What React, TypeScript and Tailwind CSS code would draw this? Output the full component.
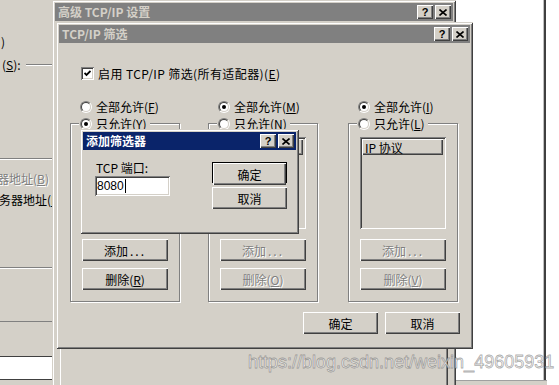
import React from "react";

// Win2k style 3D edges
const frame =
  "shadow-[inset_1px_1px_0_#d4d0c8,inset_-1px_-1px_0_#404040,inset_2px_2px_0_#ffffff,inset_-2px_-2px_0_#808080]";
const raised =
  "shadow-[inset_1px_1px_0_#ffffff,inset_-1px_-1px_0_#404040,inset_-2px_-2px_0_#808080]";
const sunken =
  "shadow-[inset_1px_1px_0_#808080,inset_-1px_-1px_0_#ffffff,inset_2px_2px_0_#404040,inset_-2px_-2px_0_#d4d0c8]";
const disabledText = "text-[#808080] [text-shadow:1px_1px_0_#ffffff]";

const TitleBtn = ({ children }: { children: React.ReactNode }) => (
  <span
    className={`flex items-center justify-center w-[16px] h-[14px] bg-[#d4d0c8] text-black ${raised}`}
  >
    {children}
  </span>
);

const CloseGlyph = () => (
  <svg width="8" height="7" viewBox="0 0 8 7">
    <path d="M0.5 0.5L7.5 6.5M7.5 0.5L0.5 6.5" stroke="#000" strokeWidth="1.6" />
  </svg>
);

const TitleBar = ({ title, active }: { title: string; active?: boolean }) => (
  <div
    className={`mx-[3px] mt-[3px] h-[18px] flex items-center justify-between pl-[3px] pr-[2px] ${
      active ? "bg-[#0a246a] text-white" : "bg-[#808080] text-[#d4d0c8]"
    }`}
  >
    <span className="font-bold leading-none whitespace-nowrap">{title}</span>
    <div className="flex gap-[2px]">
      <TitleBtn>
        <span className="font-['Liberation_Sans',sans-serif] font-bold text-[11px] leading-none">
          ?
        </span>
      </TitleBtn>
      <TitleBtn>
        <CloseGlyph />
      </TitleBtn>
    </div>
  </div>
);

const Radio = ({ checked }: { checked?: boolean }) => (
  <span className="inline-block w-[12px] h-[12px] shrink-0 rounded-full border border-t-[#808080] border-l-[#808080] border-b-white border-r-white">
    <span className="flex items-center justify-center w-full h-full rounded-full bg-white border border-t-[#404040] border-l-[#404040] border-b-[#d4d0c8] border-r-[#d4d0c8]">
      {checked && <span className="w-[4px] h-[4px] rounded-full bg-black" />}
    </span>
  </span>
);

const Checkbox = () => (
  <span className="flex items-center justify-center w-[13px] h-[13px] shrink-0 bg-white shadow-[inset_1px_1px_0_#808080,inset_-1px_-1px_0_#ffffff,inset_2px_2px_0_#404040,inset_-2px_-2px_0_#d4d0c8]">
    <svg width="7" height="7" viewBox="0 0 7 7">
      <path d="M0.5 3L2.5 5L6.5 1" stroke="#000" strokeWidth="1.8" fill="none" />
    </svg>
  </span>
);

const Btn = ({
  children,
  disabled,
  className = "",
}: {
  children: React.ReactNode;
  disabled?: boolean;
  className?: string;
}) => (
  <div
    className={`h-[22px] flex items-center justify-center bg-[#d4d0c8] whitespace-nowrap ${raised} ${
      disabled ? disabledText : ""
    } ${className}`}
  >
    {children}
  </div>
);

const Dots = () => <span className="tracking-[2px] ml-[2px]">...</span>;

interface ColumnProps {
  className: string;
  allLabel: React.ReactNode;
  onlyLabel: React.ReactNode;
  allowAll: boolean;
  header: string;
  delKey: string;
}

const FilterColumn = ({ className, allLabel, onlyLabel, allowAll, header, delKey }: ColumnProps) => (
  <div className={`w-[110px] shrink-0 ${className}`}>
    <div className="flex items-center gap-[4px] pl-[10px] h-[17px] whitespace-nowrap">
      <Radio checked={allowAll} />
      <span>{allLabel}</span>
    </div>
    <fieldset className="border border-[#808080] shadow-[inset_1px_1px_0_#ffffff,1px_1px_0_#ffffff] pl-[8px] pr-[11px] pt-[5px] pb-[11px]">
      <legend className="px-[1px] bg-[#d4d0c8]">
        <div className="flex items-center gap-[4px] h-[17px] pr-[2px] whitespace-nowrap">
          <Radio checked={!allowAll} />
          <span>{onlyLabel}</span>
        </div>
      </legend>
      <div className="ml-[3px]">
        <div className={`h-[92px] p-[2px] ${allowAll ? "bg-[#d4d0c8]" : "bg-white"} ${sunken}`}>
          <div
            className={`h-[16px] mr-[1px] flex items-center pl-[3px] bg-[#d4d0c8] whitespace-nowrap ${raised}`}
          >
            {header}
          </div>
        </div>
        <Btn className="mt-[10px]" disabled={allowAll}>
          添加
          <Dots />
        </Btn>
        <Btn className="mt-[7px]" disabled={allowAll}>
          删除(<u>{delKey}</u>)
        </Btn>
      </div>
    </fieldset>
  </div>
);

export default function App() {
  return (
    <div className="relative w-[559px] h-[385px] overflow-hidden bg-white text-[12px] leading-[17px] text-black font-['Noto_Sans_CJK_SC',sans-serif]">
      {/* white window edge on the right */}
      <div className="absolute left-[543px] top-0 w-[3px] h-[381px] border-l border-l-[#c0c0c0] bg-[#404040]" />
      <div className="absolute left-[452px] top-[380px] w-[95px] h-[5px] bg-[#d4d0c8] border-t border-t-[#a0a0a0]" />

      {/* window behind, on the left */}
      <div className="absolute left-0 top-0 w-[52px] h-[385px] bg-[#d4d0c8] overflow-hidden whitespace-nowrap">
        <div className="pt-[33px] h-[51px] pl-[1px]">)</div>
        <div className="mt-[5px] h-[17px] flex items-center pl-[2px]">
          <span>
            (<u>S</u>):
          </span>
          <div className="ml-[5px] flex-1 h-[2px] border-t border-t-[#808080] border-b border-b-white" />
        </div>
        <div className="mt-[85px] h-[2px] border-t border-t-[#808080] border-b border-b-white" />
        <div className={`mt-[10px] h-[17px] -ml-[3px] ${disabledText}`}>
          器地址(<u>B</u>)
        </div>
        <div className="mt-[4px] h-[17px] -ml-[1px]">
          务器地址(<u>E</u>)
        </div>
        <div className="mt-[59px] h-[2px] border-t border-t-[#808080] border-b border-b-white" />
        <div className="mt-[52px] h-px bg-[#808080]" />
        <div className="mt-[34px] h-px bg-[#404040]" />
        <div className="h-[22px] bg-white" />
        <div className="h-px bg-[#404040]" />
      </div>

      {/* 高级 TCP/IP 设置 */}
      <div className={`absolute left-[52px] top-0 w-[404px] h-[400px] bg-[#d4d0c8] ${frame}`}>
        <TitleBar title="高级 TCP/IP 设置" />
        <div className="mx-[8px] mt-[20px] h-[380px] border-l border-l-white border-r border-r-[#404040] shadow-[inset_-1px_0_0_#808080]" />
      </div>

      {/* TCP/IP 筛选 */}
      <div className={`absolute left-[56px] top-[22px] w-[417px] h-[327px] bg-[#d4d0c8] ${frame}`}>
        <TitleBar title="TCP/IP 筛选" />
        <div className="mt-[22px] ml-[25px] h-[17px] flex items-center gap-[4px] whitespace-nowrap">
          <Checkbox />
          <span className="tracking-[0.4px]">
            启用 TCP/IP 筛选(所有适配器)(<u>E</u>)
          </span>
        </div>
        <div className="mt-[16px] flex">
          <FilterColumn
            className="ml-[14px]"
            allowAll={false}
            allLabel={
              <>
                全部允许(<u>F</u>)
              </>
            }
            onlyLabel={
              <>
                只允许(<u>Y</u>)
              </>
            }
            header="TCP 端口"
            delKey="R"
          />
          <FilterColumn
            className="ml-[28px]"
            allowAll
            allLabel={
              <>
                全部允许(<u>M</u>)
              </>
            }
            onlyLabel={
              <>
                只允许(<u>N</u>)
              </>
            }
            header="UDP 端口"
            delKey="O"
          />
          <FilterColumn
            className="ml-[30px]"
            allowAll
            allLabel={
              <>
                全部允许(<u>I</u>)
              </>
            }
            onlyLabel={
              <>
                只允许(<u>L</u>)
              </>
            }
            header="IP 协议"
            delKey="V"
          />
        </div>
        <div className="mt-[10px] flex justify-end gap-[7px] pr-[13px]">
          <Btn className="w-[75px]">确定</Btn>
          <Btn className="w-[75px]">取消</Btn>
        </div>
      </div>

      {/* 添加筛选器 */}
      <div className={`absolute left-[80px] top-[129px] w-[219px] h-[105px] bg-[#d4d0c8] ${frame}`}>
        <TitleBar title="添加筛选器" active />
        <div className="flex">
          <div className="ml-[15px] mt-[9px] w-[75px]">
            <div className="h-[17px] pl-[1px] whitespace-nowrap">TCP 端口:</div>
            <div
              className={`h-[20px] bg-white flex items-center pl-[2px] font-['Liberation_Sans',sans-serif] text-[12px] ${sunken}`}
            >
              8080
              <span className="w-px h-[14px] bg-black ml-px" />
            </div>
          </div>
          <div className="ml-[42px] mt-[12px] w-[75px]">
            <div className="h-[21px] border border-black">
              <Btn className="h-[19px]">确定</Btn>
            </div>
            <Btn className="mt-[4px] h-[21px]">取消</Btn>
          </div>
        </div>
      </div>

      {/* watermark */}
      <div className="absolute left-[248px] top-[350px] whitespace-nowrap font-['Liberation_Sans',sans-serif] text-[18px] leading-[24px] text-[rgba(255,255,255,0.75)] [-webkit-text-stroke:0.8px_rgba(100,100,100,0.55)]">
        https://blog.csdn.net/weixin_49605931
      </div>
    </div>
  );
}
